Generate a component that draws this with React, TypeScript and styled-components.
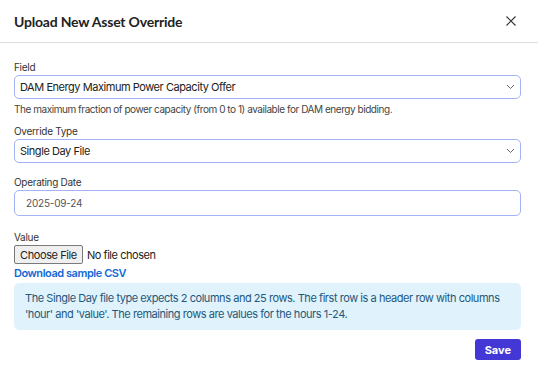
import React from 'react';
import styled, { createGlobalStyle } from 'styled-components';

const GlobalStyle = createGlobalStyle`
    html, body {
        margin: 0;
        padding: 0;
        background: #ffffff;
    }
    body {
        font-family: Inter, 'Noto Sans', Arial, sans-serif;
        color: #222222;
    }
`;

const Modal = styled.div`
    width: 538px;
    height: 373px;
    background: #ffffff;
    box-sizing: border-box;
`;

const Header = styled.div`
    height: 43px;
    box-sizing: border-box;
    display: flex;
    align-items: center;
    justify-content: space-between;
    padding: 0 17px 0 14px;
    border-bottom: 1px solid #dddddd;
`;

const Title = styled.h2`
    margin: 0;
    font-family: Lato, 'Noto Sans', sans-serif;
    font-weight: 700;
    font-size: 14px;
    letter-spacing: -0.2px;
    color: #222222;
`;

const CloseButton = styled.button`
    width: 20px;
    height: 20px;
    padding: 0;
    border: none;
    background: transparent;
    display: flex;
    align-items: center;
    justify-content: center;
    color: #333333;
    cursor: pointer;
`;

const Body = styled.div`
    padding: 17px 17px 0 14px;
    display: flex;
    flex-direction: column;
`;

const Label = styled.label`
    display: block;
    font-size: 10px;
    line-height: 14px;
    letter-spacing: -0.3px;
    color: #333333;
    margin-bottom: 1px;
`;

const Group = styled.div<{ $gap?: number }>`
    margin-bottom: ${(p) => p.$gap ?? 9}px;
`;

const SelectWrap = styled.div`
    position: relative;
`;

const Select = styled.select`
    appearance: none;
    width: 100%;
    height: 24px;
    box-sizing: border-box;
    padding: 0 24px 0 5px;
    border: 1px solid #a3b3f5;
    border-radius: 5px;
    background: #ffffff;
    font-family: Inter, 'Noto Sans', sans-serif;
    font-size: 11px;
    letter-spacing: -0.45px;
    color: #222222;
    outline: none;
`;

const Chevron = styled.svg`
    position: absolute;
    right: 6px;
    top: 9px;
    pointer-events: none;
`;

const Help = styled.p`
    margin: 3px 0 0;
    font-size: 10px;
    line-height: 14px;
    letter-spacing: -0.45px;
    color: #444444;
`;

const DateInput = styled.input`
    width: 100%;
    height: 26px;
    box-sizing: border-box;
    padding: 0 11px;
    border: 1px solid #a3b3f5;
    border-radius: 5px;
    font-family: Inter, 'Noto Sans', sans-serif;
    font-size: 10px;
    letter-spacing: -0.2px;
    color: #555555;
    outline: none;
`;

const FileInput = styled.input`
    font-family: Inter, 'Noto Sans', sans-serif;
    font-size: 11px;
    letter-spacing: -0.45px;
    color: #222222;
    display: block;

    &::file-selector-button {
        font-family: Inter, 'Noto Sans', sans-serif;
        font-size: 11px;
        letter-spacing: -0.4px;
        height: 19px;
        padding: 0 5px;
        margin-right: 4px;
        border: 1px solid #7a7a7a;
        border-radius: 2px;
        background: #efefef;
        color: #222222;
    }
`;

const DownloadLink = styled.a`
    display: block;
    margin-top: 2px;
    font-size: 11px;
    line-height: 14px;
    font-weight: 600;
    letter-spacing: -0.45px;
    color: #1169d6;
    text-decoration: none;
`;

const Info = styled.div`
    margin-top: 3px;
    padding: 7px 11px 8px;
    border-radius: 5px;
    background: #e0f2fc;
    color: #1f587a;
    font-size: 11px;
    line-height: 16px;
    letter-spacing: -0.45px;
`;

const Footer = styled.div`
    display: flex;
    justify-content: flex-end;
    margin-top: 9px;
`;

const SaveButton = styled.button`
    height: 21px;
    padding: 0 10px;
    border: none;
    border-radius: 3px;
    background: #4338d6;
    color: #ffffff;
    font-family: Inter, 'Noto Sans', sans-serif;
    font-size: 11px;
    font-weight: 700;
    cursor: pointer;
`;

function ChevronIcon(): React.ReactElement {
    return (
        <Chevron width="9" height="6" viewBox="0 0 9 6" fill="none">
            <path d="M1 1l3.5 3.5L8 1" stroke="#666666" strokeWidth="1" />
        </Chevron>
    );
}

function App(): React.ReactElement {
    return (
        <>
            <GlobalStyle />
            <Modal>
                <Header>
                    <Title>Upload New Asset Override</Title>
                    <CloseButton aria-label="Close">
                        <svg width="10" height="10" viewBox="0 0 10 10">
                            <path d="M0.5 0.5l9 9M9.5 0.5l-9 9" stroke="#333" strokeWidth="1.1" />
                        </svg>
                    </CloseButton>
                </Header>
                <Body>
                    <Group $gap={8}>
                        <Label>Field</Label>
                        <SelectWrap>
                            <Select defaultValue="dam">
                                <option value="dam">DAM Energy Maximum Power Capacity Offer</option>
                            </Select>
                            <ChevronIcon />
                        </SelectWrap>
                        <Help>The maximum fraction of power capacity (from 0 to 1) available for DAM energy bidding.</Help>
                    </Group>
                    <Group $gap={12}>
                        <Label>Override Type</Label>
                        <SelectWrap>
                            <Select defaultValue="single">
                                <option value="single">Single Day File</option>
                            </Select>
                            <ChevronIcon />
                        </SelectWrap>
                    </Group>
                    <Group $gap={14}>
                        <Label>Operating Date</Label>
                        <DateInput type="text" defaultValue="2025-09-24" />
                    </Group>
                    <Group $gap={0}>
                        <Label>Value</Label>
                        <FileInput type="file" />
                        <DownloadLink href="#">Download sample CSV</DownloadLink>
                    </Group>
                    <Info>
                        The Single Day file type expects 2 columns and 25 rows. The first row is a header row with columns
                        'hour' and 'value'. The remaining rows are values for the hours 1-24.
                    </Info>
                    <Footer>
                        <SaveButton>Save</SaveButton>
                    </Footer>
                </Body>
            </Modal>
        </>
    );
}

export default App;
